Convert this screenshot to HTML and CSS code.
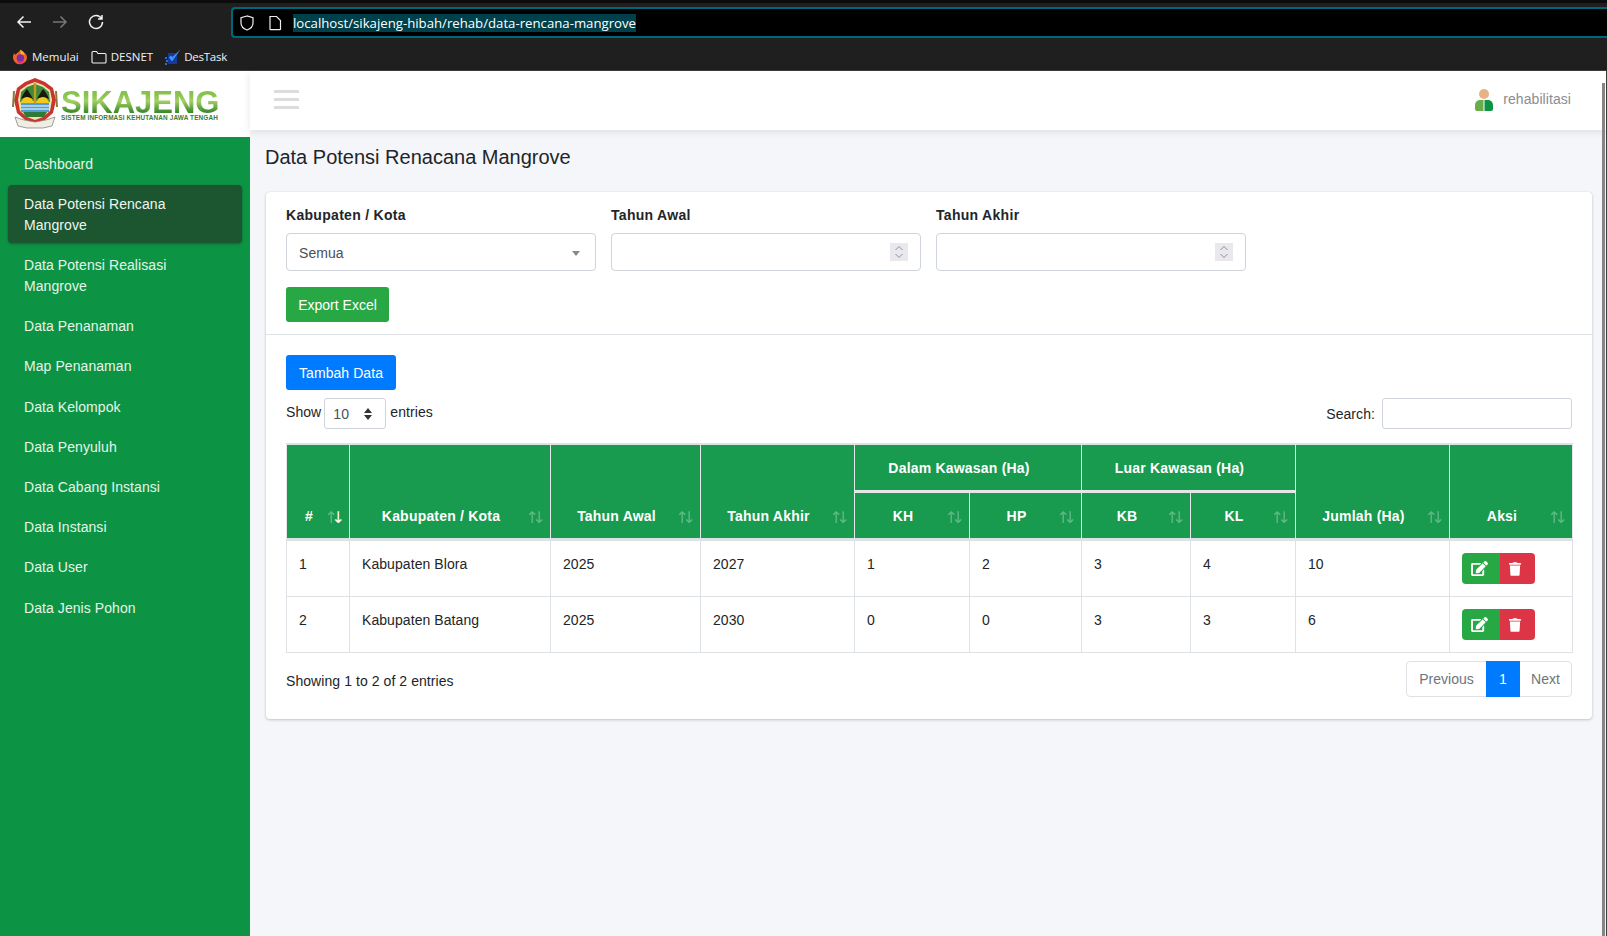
FILE: index.html
```html
<!DOCTYPE html>
<html lang="en">

<head>
    <meta charset="UTF-8">
    <meta name="viewport" content="width=device-width, initial-scale=1.0">
    <title>Data Potensi Renacana Mangrove</title>
    <link rel="stylesheet" href="styles.css">
</head>

<body>
    <!-- browser toolbar -->
    <div class="browser">
        <div class="nav_row">
            <svg class="nav_icon" viewBox="0 0 16 16"><path d="M15 8H2M7.5 2.5 2 8l5.5 5.5" /></svg>
            <svg class="nav_icon nav_dim" viewBox="0 0 16 16"><path d="M1 8h13M8.500 2.500 14 8l-5.500 5.500" /></svg>
            <svg class="nav_icon" viewBox="0 0 16 16"><path d="M13.500 4.500A6.500 6.500 0 1 0 14.500 8M14 1v4h-4" /></svg>
            <div class="url_bar">
                <svg class="url_icon" viewBox="0 0 16 16"><path d="M8 1 2 2.800V8c0 3.500 2.500 5.800 6 7 3.500-1.200 6-3.500 6-7V2.800z" /></svg>
                <svg class="url_icon" viewBox="0 0 16 16"><path d="M3 1.500h6.500L13.500 5.500V14a.7.7 0 0 1-.7.7H3.700A.7.7 0 0 1 3 14z" /></svg>
                <span class="url_text">localhost/sikajeng-hibah/rehab/data-rencana-mangrove</span>
            </div>
        </div>
        <div class="bookmark_row">
            <span class="bookmark">
                <svg class="fox_icon" viewBox="0 0 16 16">
                    <path d="M8 1.500c3 1 6.500 2.500 7 6.500A7 7 0 0 1 1 8.500C1 6.500 1.800 4.800 2.500 4c0 1 .5 1.500 1 1.800C4.500 4 6.500 3.500 8 1.500z" fill="#f2652a" />
                    <path d="M8 .5c2.500 1 4 2.800 4.500 5L9 5.500z" fill="#ffb52e" />
                    <circle cx="8.300" cy="9" r="3.700" fill="#7a2fa8" />
                    <path d="M5 11c2 2 6 1.500 7-1 .5 3-2 4.500-4 4.500S4.500 13 5 11z" fill="#e2306c" />
                </svg>
                Memulai
            </span>
            <span class="bookmark">
                <svg class="folder_icon" viewBox="0 0 16 14"><path d="M1 2.500a1 1 0 0 1 1-1h3.500L7 3.500h7a1 1 0 0 1 1 1V12a1 1 0 0 1-1 1H2a1 1 0 0 1-1-1z" /></svg>
                DESNET
            </span>
            <span class="bookmark bookmark_task">
                <svg class="task_icon" viewBox="0 0 16 16">
                    <path d="M3 4h9v11H3z" fill="#17379a" />
                    <path d="M4 8.500l3 4L15.500.5 7.500 8 5.500 6.500z" fill="#3f95f5" />
                    <path d="M0 8h2v2H0zM1 11h2v2H1zM0 14h2v2H0z" fill="#2a6fd6" />
                </svg>
                DesTask
            </span>
        </div>
    </div>

    <div class="page">
        <div class="left_col">
            <a class="brand">
                <svg class="emblem" viewBox="0 0 46 52">
                    <path d="M23 1 33 5 41 11 44 23 41 36 33 43 23 46 13 43 5 36 2 23 5 11 13 5z" fill="#c9342c" />
                    <path d="M23 5 31 8 38 13 40 23 38 34 31 40 23 43 15 40 8 34 6 23 8 13 15 8z" fill="#f0e3b0" />
                    <path d="M23 7 31 10 37 15 38 25H8L9 15 15 10z" fill="#3f8a3a" />
                    <path d="M8 26h30l-6-8-3-2-4 8h-4l-4-8-3 2z" fill="#f3c81e" />
                    <path d="M9 22c2-5 4-8 6-10 2 3 4 6 6 10-2-1-4-2-6-2s-4 1-6 2zM25 22c2-4 4-7 6-10 2 2 4 5 6 10-2-1-4-2-6-2s-4 1-6 2z" fill="#17170f" />
                    <rect x="21.800" y="6" width="2.400" height="30" fill="#c99a1c" />
                    <rect x="9" y="26" width="28" height="9" fill="#4f9fd4" />
                    <path d="M9 29h28M9 32h28" stroke="#fff" stroke-width="1" />
                    <path d="M11 35h24l-3 5H14z" fill="#2e7a38" />
                    <path d="M3 40 12 43 23 45 34 43 43 40 40 49 31 51H15L6 49z" fill="#efece2" stroke="#777" stroke-width=".7" />
                    <path d="M2 14 1 30M44 14 45 30" stroke="#8a7a3a" stroke-width="2" />
                </svg>
                <span class="brand_text">
                    <span class="brand_name">SIKAJENG</span>
                    <span class="brand_sub">SISTEM INFORMASI KEHUTANAN JAWA TENGAH</span>
                </span>
            </a>
            <nav class="sidebar">
                <a class="side_link">Dashboard</a>
                <a class="side_link active">Data Potensi Rencana Mangrove</a>
                <a class="side_link">Data Potensi Realisasi Mangrove</a>
                <a class="side_link">Data Penanaman</a>
                <a class="side_link">Map Penanaman</a>
                <a class="side_link">Data Kelompok</a>
                <a class="side_link">Data Penyuluh</a>
                <a class="side_link">Data Cabang Instansi</a>
                <a class="side_link">Data Instansi</a>
                <a class="side_link">Data User</a>
                <a class="side_link">Data Jenis Pohon</a>
            </nav>
        </div>

        <div class="right_col">
            <header class="topbar">
                <div class="hamburger"><span></span><span></span><span></span></div>
                <div class="user_box">
                    <svg class="user_icon" viewBox="0 0 18 22">
                        <circle cx="9" cy="5" r="5" fill="#e8b384" />
                        <path d="M8.500 11H5a5 5 0 0 0-5 5v4a2 2 0 0 0 2 2h6.500z" fill="#6aac4c" />
                        <path d="M9.500 11H13a5 5 0 0 1 5 5v4a2 2 0 0 1-2 2H9.500z" fill="#0c9444" />
                    </svg>
                    <span>rehabilitasi</span>
                </div>
            </header>

            <main class="content">
                <h1 class="page_title">Data Potensi Renacana Mangrove</h1>

                <div class="card">
                    <div class="card_head">
                        <div class="filter_grid">
                            <div>
                                <label class="field_label">Kabupaten / Kota</label>
                                <div class="field_box">
                                    <span>Semua</span>
                                    <span class="caret"></span>
                                </div>
                            </div>
                            <div>
                                <label class="field_label">Tahun Awal</label>
                                <div class="field_box">
                                    <span></span>
                                    <svg class="spin" viewBox="0 0 18 18"><path d="M5.500 7 9 3.500 12.500 7M5.500 11 9 14.500 12.500 11" /></svg>
                                </div>
                            </div>
                            <div>
                                <label class="field_label">Tahun Akhir</label>
                                <div class="field_box">
                                    <span></span>
                                    <svg class="spin" viewBox="0 0 18 18"><path d="M5.500 7 9 3.500 12.500 7M5.500 11 9 14.500 12.500 11" /></svg>
                                </div>
                            </div>
                        </div>
                        <button class="btn btn_green">Export Excel</button>
                    </div>

                    <div class="card_body">
                        <button class="btn btn_blue">Tambah Data</button>

                        <div class="table_tools">
                            <div class="length_box">
                                Show
                                <div class="length_select">
                                    <span>10</span>
                                    <svg class="updown" viewBox="0 0 8 12"><path d="M4 0 8 5H0zM4 12 0 7h8z" /></svg>
                                </div>
                                entries
                            </div>
                            <div class="search_box">
                                <span class="search_label">Search:</span>
                                <input class="search_input" type="text">
                            </div>
                        </div>

                        <table class="data_table">
                            <colgroup>
                                <col class="col_no">
                                <col class="col_kab">
                                <col class="col_awal">
                                <col class="col_akhir">
                                <col class="col_kh">
                                <col class="col_hp">
                                <col class="col_kb">
                                <col class="col_kl">
                                <col class="col_jml">
                                <col class="col_aksi">
                            </colgroup>
                            <thead>
                                <tr>
                                    <th rowspan="2" class="sort sort_active">#</th>
                                    <th rowspan="2" class="sort">Kabupaten / Kota</th>
                                    <th rowspan="2" class="sort">Tahun Awal</th>
                                    <th rowspan="2" class="sort">Tahun Akhir</th>
                                    <th colspan="2">Dalam Kawasan (Ha)</th>
                                    <th colspan="2">Luar Kawasan (Ha)</th>
                                    <th rowspan="2" class="sort">Jumlah (Ha)</th>
                                    <th rowspan="2" class="sort">Aksi</th>
                                </tr>
                                <tr>
                                    <th class="sort">KH</th>
                                    <th class="sort">HP</th>
                                    <th class="sort">KB</th>
                                    <th class="sort">KL</th>
                                </tr>
                            </thead>
                            <tbody>
                                <tr>
                                    <td>1</td>
                                    <td>Kabupaten Blora</td>
                                    <td>2025</td>
                                    <td>2027</td>
                                    <td>1</td>
                                    <td>2</td>
                                    <td>3</td>
                                    <td>4</td>
                                    <td>10</td>
                                    <td>
                                        <div class="action_group">
                                            <a class="act_edit"><svg class="edit_icon" viewBox="0 0 576 512"><path d="M402.600 83.200l90.200 90.200c3.800 3.800 3.800 10 0 13.800L274.400 405.600l-92.800 10.300c-12.400 1.400-22.900-9.100-21.500-21.500l10.300-92.800L388.800 83.200c3.800-3.800 10-3.800 13.800 0zm162-22.900l-48.800-48.800c-15.200-15.200-39.900-15.200-55.200 0l-35.400 35.400c-3.800 3.800-3.800 10 0 13.800l90.200 90.200c3.800 3.800 10 3.800 13.800 0l35.400-35.400c15.200-15.300 15.200-40 0-55.200zM384 346.200V448H64V128h229.800c3.200 0 6.200-1.300 8.500-3.500l40-40c7.600-7.600 2.200-20.500-8.500-20.500H48C21.500 64 0 85.500 0 112v352c0 26.500 21.500 48 48 48h352c26.500 0 48-21.500 48-48V306.200c0-10.700-12.900-16-20.500-8.500l-40 40c-2.200 2.300-3.500 5.300-3.500 8.500z" /></svg></a>
                                            <a class="act_delete"><svg class="trash_icon" viewBox="0 0 448 512"><path d="M432 32H312l-9.400-18.700A24 24 0 0 0 281.100 0H166.800a23.720 23.720 0 0 0-21.400 13.300L136 32H16A16 16 0 0 0 0 48v32a16 16 0 0 0 16 16h416a16 16 0 0 0 16-16V48a16 16 0 0 0-16-16zM53.200 467a48 48 0 0 0 47.900 45h245.800a48 48 0 0 0 47.900-45L416 128H32z" /></svg></a>
                                        </div>
                                    </td>
                                </tr>
                                <tr>
                                    <td>2</td>
                                    <td>Kabupaten Batang</td>
                                    <td>2025</td>
                                    <td>2030</td>
                                    <td>0</td>
                                    <td>0</td>
                                    <td>3</td>
                                    <td>3</td>
                                    <td>6</td>
                                    <td>
                                        <div class="action_group">
                                            <a class="act_edit"><svg class="edit_icon" viewBox="0 0 576 512"><path d="M402.600 83.200l90.200 90.200c3.800 3.800 3.800 10 0 13.800L274.400 405.600l-92.800 10.300c-12.400 1.400-22.900-9.100-21.500-21.500l10.300-92.800L388.800 83.200c3.800-3.800 10-3.800 13.800 0zm162-22.900l-48.800-48.800c-15.200-15.200-39.900-15.200-55.200 0l-35.400 35.400c-3.800 3.800-3.800 10 0 13.800l90.200 90.200c3.800 3.800 10 3.800 13.800 0l35.400-35.400c15.200-15.300 15.200-40 0-55.200zM384 346.200V448H64V128h229.800c3.200 0 6.200-1.300 8.500-3.500l40-40c7.600-7.600 2.200-20.500-8.500-20.500H48C21.500 64 0 85.500 0 112v352c0 26.500 21.500 48 48 48h352c26.500 0 48-21.500 48-48V306.200c0-10.700-12.900-16-20.500-8.500l-40 40c-2.200 2.300-3.500 5.300-3.500 8.500z" /></svg></a>
                                            <a class="act_delete"><svg class="trash_icon" viewBox="0 0 448 512"><path d="M432 32H312l-9.400-18.700A24 24 0 0 0 281.100 0H166.800a23.720 23.720 0 0 0-21.400 13.300L136 32H16A16 16 0 0 0 0 48v32a16 16 0 0 0 16 16h416a16 16 0 0 0 16-16V48a16 16 0 0 0-16-16zM53.200 467a48 48 0 0 0 47.900 45h245.800a48 48 0 0 0 47.900-45L416 128H32z" /></svg></a>
                                        </div>
                                    </td>
                                </tr>
                            </tbody>
                        </table>

                        <div class="table_foot">
                            <div class="foot_info">Showing 1 to 2 of 2 entries</div>
                            <div class="pager">
                                <a class="page_prev">Previous</a>
                                <a class="page_now">1</a>
                                <a class="page_next">Next</a>
                            </div>
                        </div>
                    </div>
                </div>
            </main>
        </div>

        <div class="scroll_thumb"></div>
    </div>
</body>

</html>
```

FILE: styles.css
```css
* {
    margin: 0;
    padding: 0;
    box-sizing: border-box;
}

body {
    width: 1607px;
    height: 936px;
    overflow: hidden;
    font-family: "Liberation Sans", Arial, sans-serif;
    font-size: 14px;
    line-height: 21px;
    letter-spacing: 0.07px;
    color: #212529;
    background: #f4f6f9;
}

/* browser toolbar */
.browser {
    height: 71px;
    background: #1f1f1f;
    border-top: 3px solid #0c0c0c;
    border-bottom: 1px solid #3c3c3c;
    font-family: "Open Sans", sans-serif;
    letter-spacing: 0;
    color: #f2f2f2;
}

.nav_row {
    height: 37px;
    display: flex;
    align-items: flex-start;
    padding: 4px 0 0 16px;
}

.nav_icon {
    width: 16px;
    height: 16px;
    margin: 7px 20px 0 0;
    fill: none;
    stroke: #f2f2f2;
    stroke-width: 1.5;
}

.nav_dim {
    stroke: #777;
}

.url_bar {
    flex: 1;
    height: 31px;
    margin-left: 107px;
    background: #000;
    border: 2px solid #00677a;
    border-right: none;
    border-radius: 4px 0 0 4px;
    display: flex;
    align-items: center;
    padding-left: 6px;
}

.url_icon {
    width: 16px;
    height: 16px;
    margin-right: 12px;
    fill: none;
    stroke: #eee;
    stroke-width: 1.2;
}

.url_text {
    margin-left: -2px;
    background: #00404a;
    font-size: 13.200px;
    line-height: 18px;
    color: #fff;
}

.bookmark_row {
    display: flex;
    gap: 12px;
    padding: 8px 0 0 12px;
    font-size: 11.500px;
    line-height: 18px;
}

.bookmark {
    display: flex;
    align-items: center;
    gap: 4px;
}

.bookmark_task {
    gap: 3px;
    letter-spacing: -0.25px;
}

.fox_icon,
.task_icon {
    width: 16px;
    height: 16px;
}

.folder_icon {
    width: 16px;
    height: 14px;
    fill: none;
    stroke: #f2f2f2;
    stroke-width: 1.1;
}

/* page */
.page {
    position: relative;
    height: 865px;
    display: flex;
    border-right: 1px solid #3c3c3c;
}

.scroll_thumb {
    position: absolute;
    top: 12px;
    bottom: 0;
    right: 1px;
    width: 3px;
    background: #858585;
}

.left_col {
    width: 250px;
    flex-shrink: 0;
    display: flex;
    flex-direction: column;
}

.brand {
    height: 66px;
    background: #fff;
    display: flex;
    padding: 6px 0 0 12px;
}

.emblem {
    width: 46px;
    height: 52px;
}

.brand_text {
    display: flex;
    flex-direction: column;
    margin-left: 3px;
    padding-top: 11.500px;
}

.brand_name {
    font-size: 31px;
    line-height: 27px;
    font-weight: bold;
    letter-spacing: 0;
    background: linear-gradient(#86c24c 20%, #a4d063 45%, #3c8c2a 85%);
    -webkit-background-clip: text;
    background-clip: text;
    color: transparent;
}

.brand_sub {
    margin-top: -2px;
    font-size: 6.400px;
    line-height: 7px;
    font-weight: bold;
    letter-spacing: 0.14px;
    white-space: nowrap;
    color: #3d7a34;
}

.sidebar {
    flex: 1;
    background: #0c9444;
    padding: 8px;
}

.side_link {
    display: block;
    padding: 8.800px 16px 7.200px;
    margin-bottom: 3.200px;
    color: #e6f5ea;
    border-radius: 4px;
}

.side_link.active {
    background: #1b5631;
    color: #f0f5f1;
    box-shadow: 0 1px 3px rgba(0, 0, 0, 0.3);
}

.right_col {
    flex: 1;
    display: flex;
    flex-direction: column;
    min-width: 0;
}

.topbar {
    height: 59px;
    background: #fff;
    box-shadow: 0 2px 8px rgba(0, 0, 0, 0.1);
    display: flex;
    justify-content: space-between;
    align-items: center;
    padding: 0 35px 2px 24px;
}

.hamburger {
    display: flex;
    flex-direction: column;
    gap: 5px;
    width: 25px;
}

.hamburger span {
    height: 3px;
    background: #dcdcdc;
}

.user_box {
    display: flex;
    align-items: center;
    gap: 10px;
    color: #8a8d91;
}

.user_icon {
    width: 18px;
    height: 22px;
}

.content {
    padding: 15px 14px 0 16px;
}

.page_title {
    margin-left: -1px;
    font-size: 20px;
    font-weight: normal;
    line-height: 24px;
    letter-spacing: 0;
    margin-bottom: 23px;
}

.card {
    background: #fff;
    border-radius: 4px;
    box-shadow: 0 0 1px rgba(0, 0, 0, 0.13), 0 1px 3px rgba(0, 0, 0, 0.2);
}

.card_head {
    padding: 13px 20px 12px;
    border-bottom: 1px solid #dee2e6;
}

.filter_grid {
    display: grid;
    grid-template-columns: repeat(3, 310px);
    column-gap: 15px;
    margin-bottom: 16px;
}

.field_label {
    display: block;
    font-weight: bold;
    letter-spacing: 0.3px;
    margin-bottom: 7px;
}

.field_box {
    height: 38px;
    border: 1px solid #ced4da;
    border-radius: 4px;
    display: flex;
    justify-content: space-between;
    align-items: center;
    padding: 2px 12px 0;
    color: #495057;
}

.caret {
    width: 0;
    height: 0;
    margin-right: 3px;
    border-left: 4px solid transparent;
    border-right: 4px solid transparent;
    border-top: 5px solid #888;
}

.spin {
    width: 18px;
    height: 18px;
    margin-top: -2px;
    background: #e9e8ed;
    fill: none;
    stroke: #8f8f9d;
    stroke-width: 1;
}

.btn {
    display: block;
    height: 35px;
    padding: 0 12px;
    border: none;
    border-radius: 3px;
    font-family: inherit;
    font-size: 14px;
    color: #fff;
}

.btn_green {
    width: 103px;
    background: #28a745;
}

.btn_blue {
    width: 110px;
    background: #007bff;
    letter-spacing: 0.07px;
}

.card_body {
    padding: 20px 20px 22px;
}

.table_tools {
    display: flex;
    justify-content: space-between;
    margin: 8px 0 15px;
}

.length_box,
.search_box {
    display: flex;
    align-items: center;
    height: 30px;
    gap: 4px;
}

.length_box {
    padding-bottom: 1px;
}

.length_select {
    width: 62px;
    height: 31px;
    margin: 1px 0 0 -1px;
    border: 1px solid #ced4da;
    border-radius: 3px;
    display: flex;
    justify-content: space-between;
    align-items: center;
    padding: 2px 13px 0 8px;
    color: #495057;
}

.updown {
    width: 8px;
    height: 12px;
    fill: #333;
}

.search_box {
    gap: 7px;
}

.search_label {
    padding-top: 3px;
}

.search_input {
    width: 190px;
    height: 31px;
    border: 1px solid #ced4da;
    border-radius: 3px;
}

.data_table {
    width: 1286px;
    table-layout: fixed;
    border-collapse: collapse;
    border: 1px solid #dee2e6;
}

.col_no { width: 63px; }
.col_kab { width: 201px; }
.col_awal { width: 150px; }
.col_akhir { width: 154px; }
.col_kh { width: 115px; }
.col_hp { width: 112px; }
.col_kb { width: 109px; }
.col_kl { width: 105px; }
.col_jml { width: 154px; }
.col_aksi { width: 123px; }

.data_table th {
    position: relative;
    padding: 13px 30px 11px 12px;
    background: #189a4f;
    color: #fff;
    text-align: center;
    vertical-align: bottom;
    border: 1px solid #e4e7ea;
    letter-spacing: 0.2px;
}

.data_table th[colspan] {
    border-bottom-width: 3px;
}

.data_table thead tr:first-child th {
    border-top: 2px solid #dee2e6;
}

.data_table th.sort {
    border-bottom: 3px solid #dee2e6;
}

/* sort arrows, same way datatables puts them */
.sort::before,
.sort::after {
    position: absolute;
    bottom: 10px;
    font-family: "DejaVu Sans", sans-serif;
    font-size: 16px;
    font-weight: normal;
    letter-spacing: 0;
    opacity: 0.3;
}

.sort::before {
    content: "\2191";
    right: 11px;
}

.sort::after {
    content: "\2193";
    right: 4px;
}

.sort_active::after {
    opacity: 1;
}

.data_table td {
    height: 56px;
    padding: 13px 12px 11px;
    vertical-align: top;
    border: 1px solid #dee2e6;
}

.data_table tbody tr:first-child td {
    height: 57px;
}

.data_table td:last-child {
    padding-top: 12px;
}

.action_group {
    display: flex;
    width: 73px;
    height: 31px;
    border-radius: 4px;
    overflow: hidden;
}

.act_edit,
.act_delete {
    display: flex;
    align-items: center;
    justify-content: center;
    fill: #fff;
}

.act_edit {
    width: 38px;
    padding-right: 3px;
    background: #28a745;
}

.act_delete {
    width: 35px;
    padding-right: 6px;
    background: #dc3545;
}

.edit_icon {
    width: 17px;
    height: 15px;
}

.trash_icon {
    width: 12px;
    height: 14px;
}

.table_foot {
    display: flex;
    justify-content: space-between;
    align-items: center;
    margin-top: 8px;
}

.foot_info {
    padding-top: 4px;
}

.pager {
    display: flex;
    height: 36px;
    border: 1px solid #dee2e6;
    border-radius: 4px;
    line-height: 34px;
    letter-spacing: 0;
    color: #6c757d;
}

.page_prev {
    width: 79px;
    text-align: center;
}

.page_now {
    width: 34px;
    margin: -1px 0;
    line-height: 36px;
    text-align: center;
    background: #007bff;
    color: #fff;
}

.page_next {
    width: 51px;
    text-align: center;
}
```
